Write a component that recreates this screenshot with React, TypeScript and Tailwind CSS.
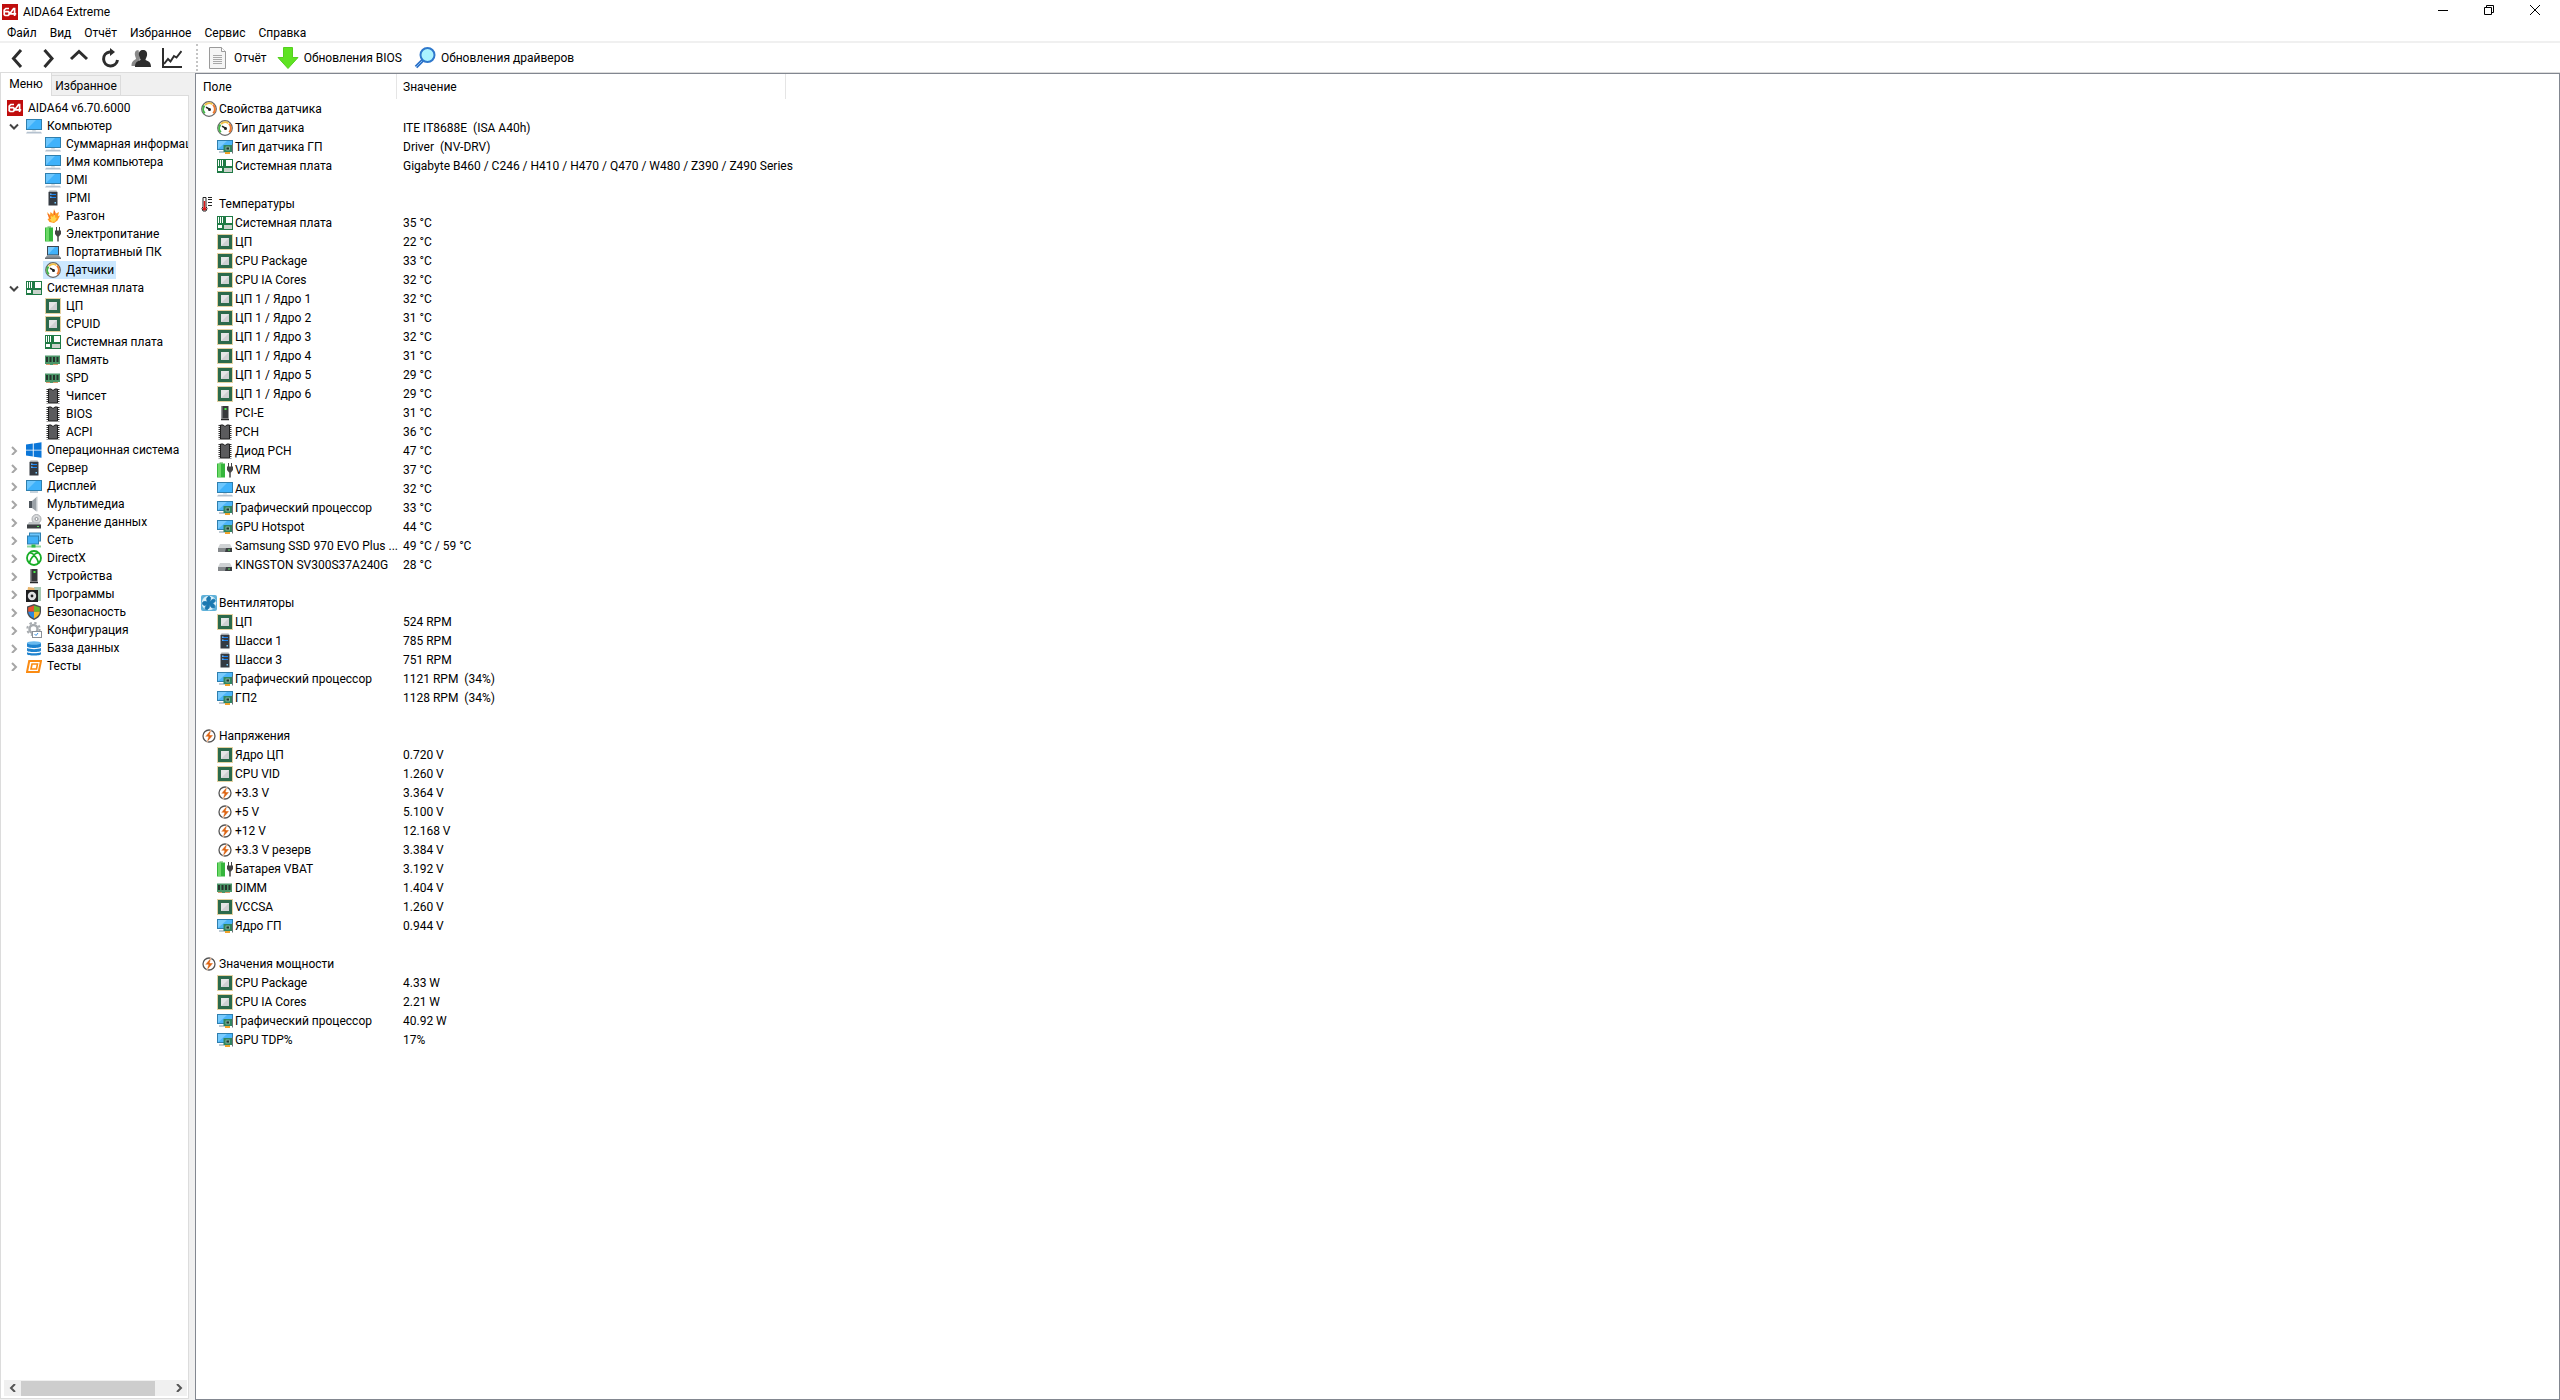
import { useState } from "react";
import type { ReactNode } from "react";

type IconName =
  | "aida" | "monitor" | "server" | "fire" | "power" | "laptop" | "gauge" | "board" | "cpu"
  | "memory" | "chip" | "windows" | "display" | "speaker" | "storage" | "network" | "directx"
  | "device" | "programs" | "shield" | "config" | "database" | "tests" | "gpu" | "thermo"
  | "fan" | "bolt" | "drive";

const ICONS: Record<IconName, ReactNode> = {
  aida: (
    <>
      <rect width="16" height="16" fill="#c00d0d" />
      <path d="M7 4.5H3.8L2.2 6v4.6l1 .9h2.9l1-.9V8.4l-.8-.8H2.6M12.6 12V4.5h-1L8.4 9v.9h5.8" fill="none" stroke="#fff" strokeWidth="1.7" />
    </>
  ),
  monitor: (
    <>
      <rect x=".5" y="1.5" width="15" height="10" fill="#3fb2fb" stroke="#2f7fae" />
      <path d="M1 11V2h9z" fill="#6cc6fd" />
      <path d="M6.5 12h3l.8 1.5H5.7z" fill="#d7dde2" />
      <path d="M1 13.8h14l1 1.7H0z" fill="#b5c2cf" />
    </>
  ),
  display: (
    <>
      <rect x=".5" y="2.5" width="15" height="10" fill="#3fb2fb" stroke="#2f7fae" />
      <path d="M1 12V3h9z" fill="#6cc6fd" />
      <path d="M4 14h8" stroke="#8fa6b8" />
    </>
  ),
  server: (
    <>
      <path d="M4.5.5h7l1 1.5H3.5z" fill="#a5a9ad" />
      <rect x="3.5" y="2" width="9" height="13.5" fill="#343a42" />
      <path d="M5 4.500h6M5 7.500h6" stroke="#1c86f2" strokeWidth="1.200" />
      <path d="M5 4h1.500M5 7h1.500" stroke="#8cc8ff" />
      <rect x="9.500" y="12" width="1.500" height="1.500" fill="#7cd0ff" />
    </>
  ),
  fire: (
    <>
      <path d="M2 4l3 3 .5-3L8 6l1-5 2 4.500L14 4l-1 4 2-.5-2.500 5L9 15l-4.500-1L2.500 11 4 10.500z" fill="#ff9a1f" />
      <path d="M6 8l2 1 1.500-3 1 4 1.500-.5-2 4-3 .5-2-2.500z" fill="#ffd54a" />
      <path d="M3 6l2.500 5M9.500 3v4" stroke="#f0642c" />
    </>
  ),
  power: (
    <>
      <rect x="2.500" y="0" width="3.500" height="2" fill="#a9d8a6" />
      <rect x="0" y="1.500" width="8" height="14" fill="#35b53c" />
      <rect x="1" y="2" width="3" height="13" fill="#6cd967" />
      <path d="M11.500 1v4M14.500 1v4" stroke="#444" />
      <path d="M10 4.500h6V8l-2 2.500h-2L10 8z" fill="#444" />
      <path d="M13 10v5.500" stroke="#444" strokeWidth="1.500" />
    </>
  ),
  laptop: (
    <>
      <rect x="2.500" y="2.500" width="11" height="8.500" fill="#42b2fa" stroke="#3c4650" />
      <path d="M3 10.500V3h7z" fill="#77cbfd" />
      <path d="M2 11.500h12l2 2.500H0z" fill="#8b939a" />
      <path d="M0 14.300h16" stroke="#454b50" />
    </>
  ),
  gauge: (
    <>
      <circle cx="8" cy="8" r="7.300" fill="#fff" stroke="#666" strokeWidth="1.200" />
      <path d="M3.800 12.200A5.800 5.800 0 0 1 3.500 4.500" fill="none" stroke="#45b549" strokeWidth="2" />
      <path d="M4 4a5.800 5.800 0 0 1 7.500-.8" fill="none" stroke="#f2c14a" strokeWidth="2" />
      <path d="M12 3.800a5.800 5.800 0 0 1 .2 8.400" fill="none" stroke="#ee7a30" strokeWidth="2" />
      <circle cx="8.500" cy="8.500" r="1.500" fill="#222" />
      <path d="M5 6.200l4 2.300" stroke="#222" strokeWidth="1.500" />
    </>
  ),
  board: (
    <>
      <rect x="0" y="1" width="16" height="14" fill="#1f7a45" />
      <path d="M1.500 2v6M3.500 2v6M5.500 2v6" stroke="#fff" />
      <rect x="9" y="2" width="6" height="6" fill="#fff" />
      <rect x="1" y="10" width="4" height="3" fill="#fff" />
      <path d="M7 10h8v4H7z" fill="#c9d2cb" />
    </>
  ),
  cpu: (
    <>
      <rect x=".5" y=".5" width="15" height="15" fill="none" stroke="#c9a545" strokeDasharray="1 1" />
      <rect x="1" y="1" width="14" height="14" fill="#2c6a4b" />
      <rect x="4" y="4" width="8" height="8" fill="#cfd1d3" />
      <path d="M4 12V4h8z" fill="#e4e5e6" />
    </>
  ),
  memory: (
    <>
      <path d="M0 3.500h15V12h-4v1H4v-1H0z" fill="#4a9668" />
      <path d="M2 5v5M5.500 5v5M9 5v5M12.500 5v5" stroke="#26352d" strokeWidth="2" />
      <path d="M1 12.500h4M8 12.500h5" stroke="#d99a6c" />
    </>
  ),
  chip: (
    <>
      <path d="M2.500 1v14.500M13.500 1v14.500" stroke="#333" strokeWidth="2" strokeDasharray="1 1" />
      <path d="M3.500 1H6l2 1.500L10 1h2.500v14h-9z" fill="#5b5b5d" stroke="#1f1f1f" />
    </>
  ),
  windows: <path d="M0 2.600l6.800-1V7.700H0zM7.700 1.500L15.500.3v7.400H7.700zM0 8.500h6.800v6.100L0 13.600zM7.700 8.500h7.800v7.300l-7.800-1.100z" fill="#0b76d8" />,
  speaker: (
    <>
      <path d="M3 5h3v7H3z" fill="#4e555c" />
      <path d="M6 5l4.500-4v14.500L6 12z" fill="#9aa1a7" />
      <path d="M10 1l1.500-.5v15L10 15z" fill="#c6cbcf" />
    </>
  ),
  storage: (
    <>
      <circle cx="10.500" cy="5" r="4.500" fill="#d8dadc" stroke="#a9adb0" />
      <circle cx="10.500" cy="5" r="1.500" fill="#fff" stroke="#8d9194" />
      <path d="M3 8h10l1.500 3h-13z" fill="#bfc3c6" />
      <rect x="1" y="10.500" width="14" height="4" fill="#3c4043" />
      <rect x="11" y="12" width="2" height="1" fill="#57e35b" />
    </>
  ),
  network: (
    <>
      <rect x="3.500" y="1" width="11" height="8" fill="#6cc6fd" stroke="#2f7fae" />
      <rect x="1.500" y="4" width="11" height="8" fill="#41b0f7" stroke="#2f7fae" />
      <path d="M1 14.500h14" stroke="#8fd59a" strokeWidth="2" />
      <rect x="5.500" y="12.500" width="4" height="3" fill="#2eb84a" />
    </>
  ),
  directx: (
    <>
      <circle cx="8" cy="8" r="7" fill="#fff" stroke="#18ad27" strokeWidth="1.800" />
      <path d="M3.500 13.500C4 10 6 7 8 5.500c2 1.500 4 4.500 4.500 8M3.800 3c2-.4 3.200.7 4.200 1.700C9 3.700 10.200 2.600 12.200 3" fill="none" stroke="#18ad27" strokeWidth="1.600" />
    </>
  ),
  device: (
    <>
      <rect x="4.500" y="1" width="7" height="12.500" fill="#37393b" />
      <path d="M4.500 1h1v12.500h-1z" fill="#8b8e90" />
      <path d="M4 14.500h8" stroke="#28292a" strokeWidth="1.500" />
      <rect x="7.500" y="3" width="2" height="2" fill="#4af04a" />
    </>
  ),
  programs: (
    <>
      <path d="M2 1l8 1-3 6H1z" fill="#e6b36b" />
      <path d="M8 1h7v14h-4z" fill="#a8c9b4" />
      <rect x="0" y="4" width="12" height="12" fill="#1d1e20" />
      <circle cx="6" cy="10" r="4.200" fill="#dfe1e3" />
      <circle cx="6" cy="10" r="1.400" fill="#1d1e20" />
    </>
  ),
  shield: (
    <>
      <path d="M8 0l7 2.500v5c0 4-3 7-7 8.500-4-1.500-7-4.500-7-8.500v-5z" fill="#4b4d50" />
      <path d="M8 1.500v6.300H2.200V3.500z" fill="#e8502c" />
      <path d="M8 1.500v6.300h5.800V3.500z" fill="#6cb52d" />
      <path d="M2.200 7.800H8v6.700c-3-1.200-5.500-3.500-5.800-6.700z" fill="#2b88e0" />
      <path d="M13.800 7.800H8v6.700c3-1.200 5.500-3.500 5.800-6.700z" fill="#f6bd2c" />
    </>
  ),
  config: (
    <>
      <circle cx="7.500" cy="7" r="4" fill="#fff" stroke="#a7abaf" strokeWidth="2.500" />
      <circle cx="7.500" cy="7" r="6.200" fill="none" stroke="#a7abaf" strokeWidth="2" strokeDasharray="2.400 2.470" />
      <rect x="6.500" y="9.500" width="9" height="6" fill="#fff" stroke="#8a9097" />
      <path d="M8.500 12l1.500 1.500L12 11" fill="none" stroke="#3a91e0" />
    </>
  ),
  database: (
    <>
      <path d="M1 3v3.300c0 2.200 14 2.200 14 0V3z" fill="#1f83cf" />
      <ellipse cx="8" cy="3" rx="7" ry="1.800" fill="#69b9ee" />
      <path d="M1 8c3 1.500 11 1.500 14 0v2.500c0 2-14 2-14 0zM1 12.200c3 1.500 11 1.500 14 0V14c0 2-14 2-14 0z" fill="#1f83cf" />
    </>
  ),
  tests: (
    <>
      <path d="M3.200 3H15l-2.300 11H1z" fill="#fff" stroke="#fb8b12" strokeWidth="2" />
      <path d="M6 6h5.500l-1 5H5z" fill="#fff" stroke="#fb8b12" strokeWidth="1.600" />
    </>
  ),
  gpu: (
    <>
      <rect x=".5" y="1.500" width="15" height="9" fill="#4cb5fa" stroke="#2f7fae" />
      <path d="M1 10V2h9z" fill="#79cbfd" />
      <path d="M2 13h6" stroke="#a8b8c6" strokeWidth="1.500" />
      <rect x="6.500" y="6" width="8.500" height="7" fill="#2f8560" />
      <rect x="9" y="8" width="3.500" height="3" fill="#1e3b30" stroke="#a4cdb9" strokeWidth=".7" />
      <path d="M8 14h5" stroke="#f0a32c" strokeWidth="2" />
      <path d="M15.500 5v9.500" stroke="#6b7377" />
    </>
  ),
  thermo: (
    <>
      <path d="M2 1.500h3v9l1 2-1 2.500H2L1 12.500l1-2z" fill="#fff" stroke="#222" />
      <path d="M3.500 5v8" stroke="#e01919" strokeWidth="1.500" />
      <circle cx="3.500" cy="12.800" r="1.800" fill="#e01919" />
      <path d="M7 1.500h4M7 3.500h4M7 6.500h4M7 9.500h4" stroke="#222" />
    </>
  ),
  fan: (
    <>
      <rect width="16" height="16" rx="2" fill="#5fb1d9" />
      <circle cx="8" cy="8" r="7.300" fill="#d9eff9" />
      <path
        d="M8 8C5 6 5 2 8 1.500c2 0 2 3 0 6.500 2-3 5-5 6-3 .8 2-2 4-6 3 4 0 7 2 5.500 4.500C12 14 9 12 8 8c1 4 0 6.500-2.500 6.500S4 11 8 8c-3 3-6 3-6.500.5C1.500 6 5 6 8 8z"
        fill="#1a78b0"
        stroke="#1a78b0"
      />
    </>
  ),
  bolt: (
    <>
      <circle cx="8" cy="8" r="6" fill="#fff" stroke="#555" strokeWidth="1.300" />
      <path d="M10.500 1L4 8.800h3.300L5.500 15l6.800-8H8.800z" fill="#dd6412" stroke="#fff" strokeWidth=".5" />
    </>
  ),
  drive: (
    <>
      <path d="M3 6h10l2 4H1z" fill="#cfd2d4" />
      <rect x="1" y="10" width="14" height="4" fill="#3b3f42" />
      <path d="M1 10h8l-1 4H1z" fill="#85898c" />
      <rect x="11" y="11.500" width="2" height="1" fill="#57e35b" />
    </>
  ),
};

function Icon({ name }: { name: IconName }) {
  return (
    <svg viewBox="0 0 16 16" className="h-4 w-4 shrink-0" aria-hidden="true">
      {ICONS[name]}
    </svg>
  );
}

interface TreeNode {
  icon: IconName;
  label: string;
  children?: TreeNode[];
}

const TREE: TreeNode[] = [
  {
    icon: "monitor",
    label: "Компьютер",
    children: [
      { icon: "monitor", label: "Суммарная информация" },
      { icon: "monitor", label: "Имя компьютера" },
      { icon: "monitor", label: "DMI" },
      { icon: "server", label: "IPMI" },
      { icon: "fire", label: "Разгон" },
      { icon: "power", label: "Электропитание" },
      { icon: "laptop", label: "Портативный ПК" },
      { icon: "gauge", label: "Датчики" },
    ],
  },
  {
    icon: "board",
    label: "Системная плата",
    children: [
      { icon: "cpu", label: "ЦП" },
      { icon: "cpu", label: "CPUID" },
      { icon: "board", label: "Системная плата" },
      { icon: "memory", label: "Память" },
      { icon: "memory", label: "SPD" },
      { icon: "chip", label: "Чипсет" },
      { icon: "chip", label: "BIOS" },
      { icon: "chip", label: "ACPI" },
    ],
  },
  { icon: "windows", label: "Операционная система" },
  { icon: "server", label: "Сервер" },
  { icon: "display", label: "Дисплей" },
  { icon: "speaker", label: "Мультимедиа" },
  { icon: "storage", label: "Хранение данных" },
  { icon: "network", label: "Сеть" },
  { icon: "directx", label: "DirectX" },
  { icon: "device", label: "Устройства" },
  { icon: "programs", label: "Программы" },
  { icon: "shield", label: "Безопасность" },
  { icon: "config", label: "Конфигурация" },
  { icon: "database", label: "База данных" },
  { icon: "tests", label: "Тесты" },
];

interface Group {
  icon: IconName;
  label: string;
  rows: [IconName, string, string][];
}

const GROUPS: Group[] = [
  {
    icon: "gauge",
    label: "Свойства датчика",
    rows: [
      ["gauge", "Тип датчика", "ITE IT8688E  (ISA A40h)"],
      ["gpu", "Тип датчика ГП", "Driver  (NV-DRV)"],
      ["board", "Системная плата", "Gigabyte B460 / C246 / H410 / H470 / Q470 / W480 / Z390 / Z490 Series"],
    ],
  },
  {
    icon: "thermo",
    label: "Температуры",
    rows: [
      ["board", "Системная плата", "35 °C"],
      ["cpu", "ЦП", "22 °C"],
      ["cpu", "CPU Package", "33 °C"],
      ["cpu", "CPU IA Cores", "32 °C"],
      ["cpu", "ЦП 1 / Ядро 1", "32 °C"],
      ["cpu", "ЦП 1 / Ядро 2", "31 °C"],
      ["cpu", "ЦП 1 / Ядро 3", "32 °C"],
      ["cpu", "ЦП 1 / Ядро 4", "31 °C"],
      ["cpu", "ЦП 1 / Ядро 5", "29 °C"],
      ["cpu", "ЦП 1 / Ядро 6", "29 °C"],
      ["device", "PCI-E", "31 °C"],
      ["chip", "PCH", "36 °C"],
      ["chip", "Диод PCH", "47 °C"],
      ["power", "VRM", "37 °C"],
      ["monitor", "Aux", "32 °C"],
      ["gpu", "Графический процессор", "33 °C"],
      ["gpu", "GPU Hotspot", "44 °C"],
      ["drive", "Samsung SSD 970 EVO Plus ...", "49 °C / 59 °C"],
      ["drive", "KINGSTON SV300S37A240G", "28 °C"],
    ],
  },
  {
    icon: "fan",
    label: "Вентиляторы",
    rows: [
      ["cpu", "ЦП", "524 RPM"],
      ["server", "Шасси 1", "785 RPM"],
      ["server", "Шасси 3", "751 RPM"],
      ["gpu", "Графический процессор", "1121 RPM  (34%)"],
      ["gpu", "ГП2", "1128 RPM  (34%)"],
    ],
  },
  {
    icon: "bolt",
    label: "Напряжения",
    rows: [
      ["cpu", "Ядро ЦП", "0.720 V"],
      ["cpu", "CPU VID", "1.260 V"],
      ["bolt", "+3.3 V", "3.364 V"],
      ["bolt", "+5 V", "5.100 V"],
      ["bolt", "+12 V", "12.168 V"],
      ["bolt", "+3.3 V резерв", "3.384 V"],
      ["power", "Батарея VBAT", "3.192 V"],
      ["memory", "DIMM", "1.404 V"],
      ["cpu", "VCCSA", "1.260 V"],
      ["gpu", "Ядро ГП", "0.944 V"],
    ],
  },
  {
    icon: "bolt",
    label: "Значения мощности",
    rows: [
      ["cpu", "CPU Package", "4.33 W"],
      ["cpu", "CPU IA Cores", "2.21 W"],
      ["gpu", "Графический процессор", "40.92 W"],
      ["gpu", "GPU TDP%", "17%"],
    ],
  },
];

const MENU = ["Файл", "Вид", "Отчёт", "Избранное", "Сервис", "Справка"];

const NAV_TOOLS: { label: string; art: ReactNode }[] = [
  { label: "Назад", art: <path d="M14 2L6.500 10.500 14 19" strokeWidth="3" /> },
  { label: "Вперёд", art: <path d="M6.500 2L14 10.500 6.500 19" strokeWidth="3" /> },
  { label: "Вверх", art: <path d="M2 11L10 3.500 18 11" strokeWidth="3" /> },
  {
    label: "Обновить",
    art: (
      <>
        <path d="M12 4H9.500a7 7 0 1 0 8 8" strokeWidth="3" />
        <path d="M10 0l5 4-5 4z" fill="#2d2d2d" stroke="none" />
      </>
    ),
  },
  {
    label: "Пользователи",
    art: (
      <>
        <path d="M7.500 2C4 2 3.500 5 4 7.500c.3 1.500 1 2.500 1 3.500C3 12.500.5 13 .5 18H5l4-7z" fill="#8a8a8a" stroke="none" />
        <path d="M12 2c3.500 0 4.500 2.500 4 5.500-.3 2-1.500 3-1.500 4.500 3 1.200 5.500 2 5.500 7H4c0-5 2.500-5.800 5.500-7 0-1.500-1.200-2.500-1.500-4.500C7.500 4.500 8.500 2 12 2z" fill="#2d2d2d" stroke="none" />
      </>
    ),
  },
  {
    label: "График",
    art: (
      <>
        <path d="M1 0v19h19" strokeWidth="2" />
        <path d="M2 16l4-5 2.500 2.500L12 8l2.500 1.500L19.500 3" strokeWidth="2" />
      </>
    ),
  },
];

function WindowButtons() {
  return (
    <div className="flex">
      <button aria-label="Свернуть" className="flex h-6 w-[46px] items-start justify-center pt-[5px]">
        <svg viewBox="0 0 10 10" className="h-[10px] w-[10px]"><path d="M0 5.500h10" stroke="#000" /></svg>
      </button>
      <button aria-label="Восстановить" className="flex h-6 w-[46px] items-start justify-center pt-[5px]">
        <svg viewBox="0 0 10 10" className="h-[10px] w-[10px]" fill="none" stroke="#000">
          <path d="M.5 2.500h7v7h-7zM2.500 2.500v-2h7v7h-2" />
        </svg>
      </button>
      <button aria-label="Закрыть" className="flex h-6 w-[46px] items-start justify-center pt-[5px]">
        <svg viewBox="0 0 10 10" className="h-[10px] w-[10px]" stroke="#000"><path d="M0 0l10 10M10 0L0 10" /></svg>
      </button>
    </div>
  );
}

function Toolbar() {
  return (
    <div className="flex h-[30px] items-center border-b border-[#dcdcdc] bg-white pl-px">
      {NAV_TOOLS.map((tool) => (
        <button key={tool.label} aria-label={tool.label} className="flex w-[31px] justify-center">
          <svg viewBox="0 0 20 20" className="h-5 w-5" fill="none" stroke="#2d2d2d">
            {tool.art}
          </svg>
        </button>
      ))}
      <div className="ml-[9px] h-[27px] border-l-2 border-dotted border-[#c4c4c4]" />
      <button className="ml-[11px] flex items-center gap-2">
        <svg viewBox="0 0 17 22" className="h-[22px] w-[17px]" aria-hidden="true">
          <path d="M.5.5h12l4 4v17H.5z" fill="#f5f5f5" stroke="#9a9a9a" />
          <path d="M12.500.5v4h4" fill="#fff" stroke="#9a9a9a" />
          <path d="M4 8.500h9M4 10.500h9M4 12.500h9M4 14.500h9M4 16.500h9" stroke="#a8a8a8" />
        </svg>
        Отчёт
      </button>
      <button className="ml-[10px] flex items-center gap-[5px]">
        <svg viewBox="0 0 22 22" className="h-[22px] w-[22px]" aria-hidden="true">
          <path d="M6.500.5h9v10h5.500L11 21.500 1 10.500h5.500z" fill="#5fe322" stroke="#54cf1f" />
        </svg>
        Обновления BIOS
      </button>
      <button className="ml-3 flex items-center gap-[5px]">
        <svg viewBox="0 0 22 22" className="h-[22px] w-[22px]" fill="none" aria-hidden="true">
          <path d="M2 20l7-7" stroke="#2b6fc6" strokeWidth="3.500" />
          <path d="M2 20l7-7" stroke="#7db8f2" strokeWidth="1" />
          <circle cx="13.500" cy="8" r="7" fill="#abf3ff" stroke="#2f78cc" strokeWidth="2" />
        </svg>
        Обновления драйверов
      </button>
    </div>
  );
}

function Chevron({ open }: { open: boolean }) {
  return (
    <svg viewBox="0 0 10 10" className="h-[10px] w-[10px] shrink-0" fill="none" strokeWidth="2" aria-hidden="true">
      {open ? <path d="M1 3.500l4 4 4-4" stroke="#444" /> : <path d="M3 2l4 4-4 4" stroke="#a6a6a6" />}
    </svg>
  );
}

function Tree() {
  const [selected, setSelected] = useState("Датчики");
  const [open, setOpen] = useState<string[]>(["Компьютер", "Системная плата"]);

  const toggle = (label: string) =>
    setOpen((prev) => (prev.includes(label) ? prev.filter((l) => l !== label) : [...prev, label]));

  return (
    <ul className="flex-1 overflow-hidden whitespace-nowrap pt-[3px]">
      <li className="flex h-[18px] items-center gap-[5px] pl-[6px]">
        <Icon name="aida" />
        AIDA64 v6.70.6000
      </li>
      {TREE.map((node) => {
        const isOpen = open.includes(node.label);
        return (
          <li key={node.label}>
            <button onClick={() => toggle(node.label)} className="flex h-[18px] items-center pl-2">
              <Chevron open={isOpen} />
              <span className="ml-[7px] flex items-center gap-[5px]">
                <Icon name={node.icon} />
                {node.label}
              </span>
            </button>
            {isOpen && node.children && (
              <ul className="pl-[42px]">
                {node.children.map((child) => (
                  <li key={child.label}>
                    <button
                      onClick={() => setSelected(child.label)}
                      className={`flex h-[18px] items-center gap-[5px] pl-[2px] pr-[2px] ${selected === child.label ? "bg-[#cce8ff]" : ""}`}
                    >
                      <Icon name={child.icon} />
                      {child.label}
                    </button>
                  </li>
                ))}
              </ul>
            )}
          </li>
        );
      })}
    </ul>
  );
}

function Sidebar() {
  return (
    <aside className="flex w-[195px] shrink-0 flex-col pb-px pr-[6px]">
      {/* Tabs */}
      <div className="flex h-[22px] items-end">
        <button className="relative z-10 -mb-px h-[23px] w-[52px] border-x border-[#dcdcdc] bg-white pb-[2px] text-center">Меню</button>
        <button className="h-5 w-[69px] border border-b-0 border-l-0 border-[#dcdcdc] bg-[#f0f0f0] text-center">Избранное</button>
      </div>
      <div className="flex min-h-0 flex-1 flex-col border border-[#dcdcdc] bg-white">
        <Tree />
        {/* Horizontal scrollbar */}
        <div className="mx-[3px] mb-[2px] mr-px flex h-4 items-center bg-[#f0f0f0]">
          <button aria-label="Прокрутить влево" className="flex w-[17px] justify-center">
            <svg viewBox="0 0 8 8" className="h-2 w-2" fill="none" stroke="#555" strokeWidth="2"><path d="M6 0L2 4l4 4" /></svg>
          </button>
          <div className="flex h-[15px] flex-1">
            <div className="w-[90%] bg-[#cdcdcd]" />
          </div>
          <button aria-label="Прокрутить вправо" className="flex w-[17px] justify-center">
            <svg viewBox="0 0 8 8" className="h-2 w-2" fill="none" stroke="#555" strokeWidth="2"><path d="M2 0l4 4-4 4" /></svg>
          </button>
        </div>
      </div>
    </aside>
  );
}

function SensorTable() {
  return (
    <table className="w-[590px] table-fixed border-separate border-spacing-0 whitespace-pre text-left">
      <thead>
        <tr className="h-[25px]">
          <th className="w-[201px] border-r border-[#e5e5e5] p-0 pl-[7px] font-normal">Поле</th>
          <th className="border-r border-[#e5e5e5] p-0 pl-[6px] font-normal">Значение</th>
        </tr>
      </thead>
      {GROUPS.map((group, i) => (
        <tbody key={group.label}>
          {i > 0 && (
            <tr className="h-[19px]">
              <td colSpan={2} className="p-0" />
            </tr>
          )}
          <tr className="h-[19px]">
            <th colSpan={2} className="p-0 pl-[5px] font-normal">
              <div className="flex items-center gap-[2px]">
                <Icon name={group.icon} />
                {group.label}
              </div>
            </th>
          </tr>
          {group.rows.map(([icon, name, value]) => (
            <tr key={name} className="h-[19px]">
              <td className="p-0 pl-[21px]">
                <div className="flex items-center gap-[2px]">
                  <Icon name={icon} />
                  {name}
                </div>
              </td>
              <td className="p-0 pl-[6px]">{value}</td>
            </tr>
          ))}
        </tbody>
      ))}
    </table>
  );
}

export default function App() {
  return (
    <div className="flex h-screen flex-col bg-[#f0f0f0] font-[Roboto,'Noto_Sans',sans-serif] text-[12px] leading-[18px] text-black">
      {/* Title bar */}
      <header className="flex h-6 items-center justify-between bg-white px-[2px]">
        <div className="flex items-center gap-[5px]">
          <Icon name="aida" />
          <h1>AIDA64 Extreme</h1>
        </div>
        <WindowButtons />
      </header>

      <nav className="flex h-[17px] items-center gap-px bg-white pl-px">
        {MENU.map((item) => (
          <button key={item} className="px-[6px]">{item}</button>
        ))}
      </nav>
      <div className="h-[2px] bg-[#f0f0f0]" />

      <Toolbar />

      <div className="flex min-h-0 flex-1">
        <Sidebar />
        <main className="min-w-0 flex-1 overflow-hidden border border-[#828790] bg-white">
          <SensorTable />
        </main>
      </div>
    </div>
  );
}
